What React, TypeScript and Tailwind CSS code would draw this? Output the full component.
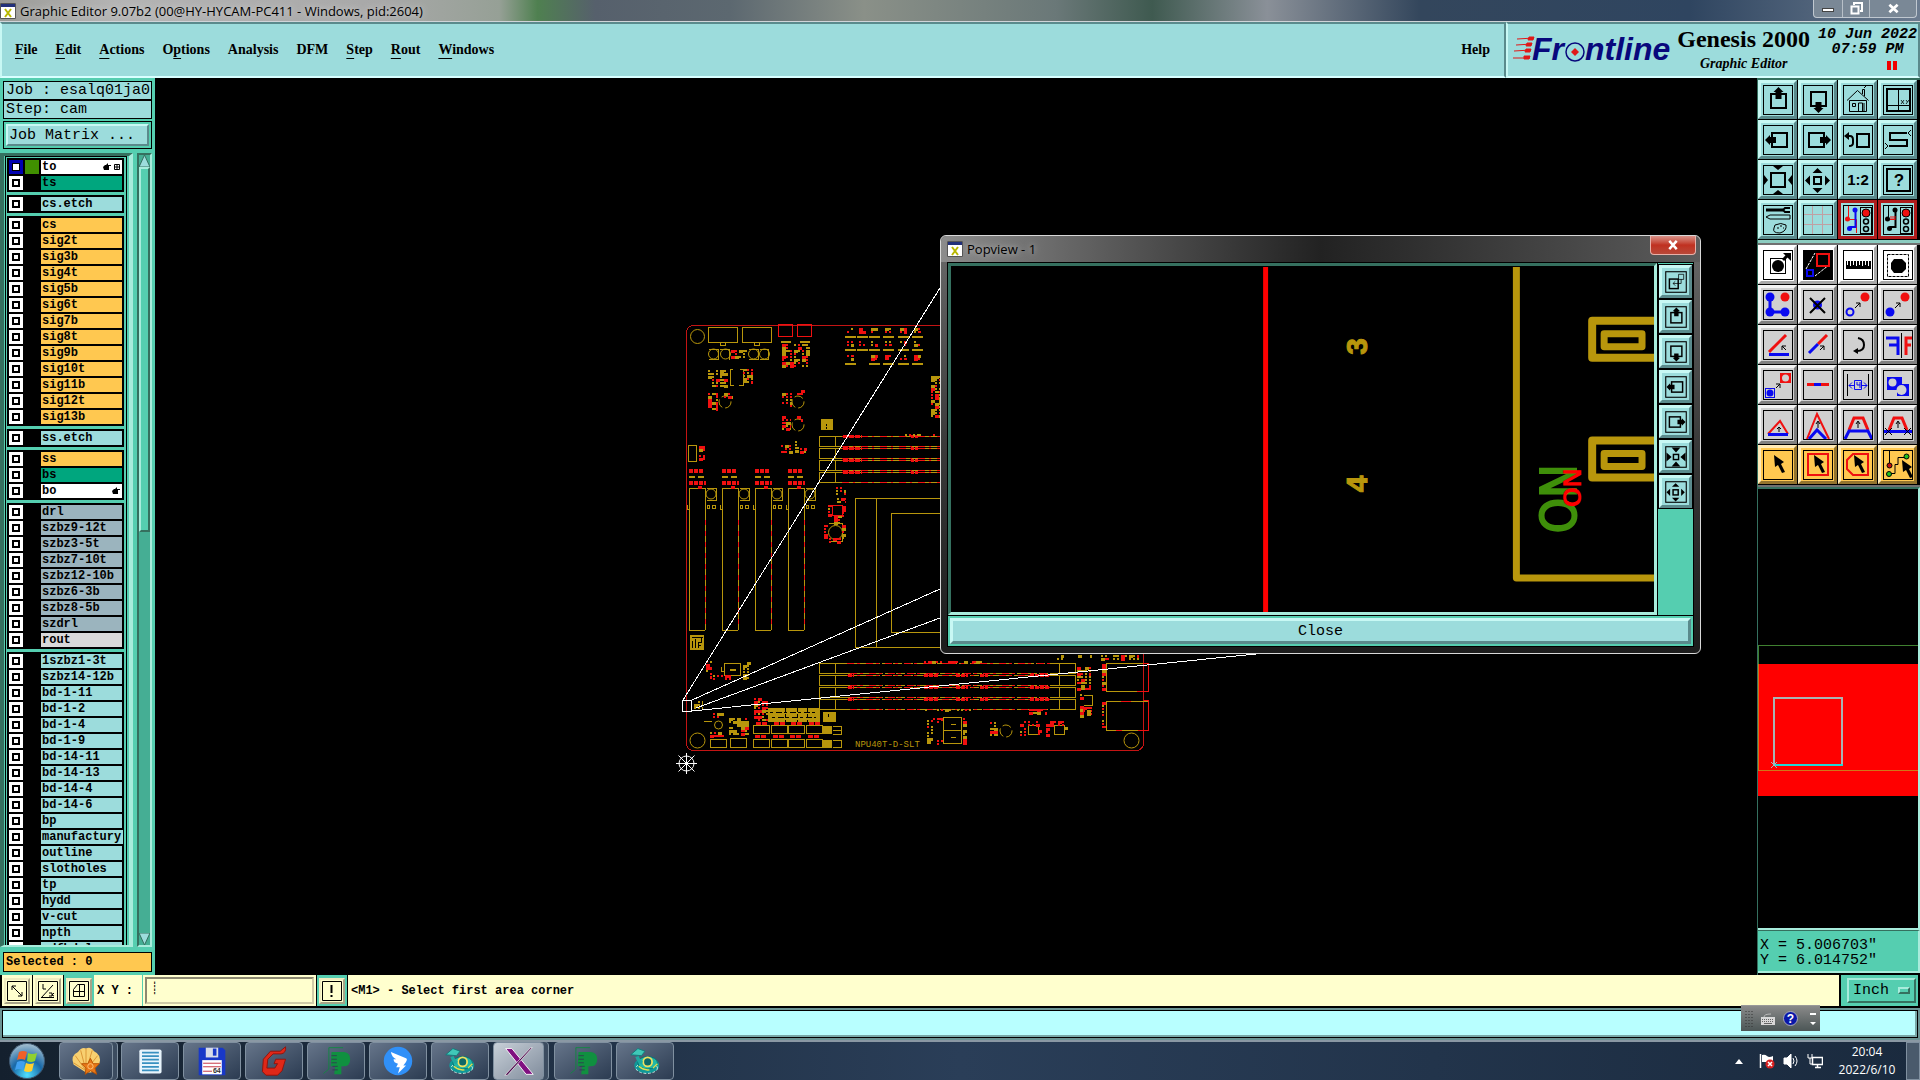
import { useState, type ReactNode } from "react";
import clsx from "clsx";

const GOLD = "#b8960c";
const RED = "#f01010";
const BLUE = "#0a0af0";
const INK = "#000";

type Layer = { name: string; tone: string; marks?: string };

const AQUA = "bg-[#9cdcdc]";
const AMBER = "bg-[#ffc850]";
const GREEN = "bg-[#00a67e]";
const STEEL = "bg-[#9bb4be]";

const layersOf = (tone: string, names: string): Layer[] =>
  names.split(" ").map((name) => ({ name, tone }));

const layerGroups: Layer[][] = [
  [
    { name: "to", tone: "bg-white", marks: "hand-grid" },
    { name: "ts", tone: GREEN },
  ],
  layersOf(AQUA, "cs.etch"),
  layersOf(
    AMBER,
    "cs sig2t sig3b sig4t sig5b sig6t sig7b sig8t sig9b sig10t sig11b sig12t sig13b"
  ),
  layersOf(AQUA, "ss.etch"),
  [
    { name: "ss", tone: AMBER },
    { name: "bs", tone: GREEN },
    { name: "bo", tone: "bg-white", marks: "hand" },
  ],
  [
    ...layersOf(
      STEEL,
      "drl szbz9-12t szbz3-5t szbz7-10t szbz12-10b szbz6-3b szbz8-5b szdrl"
    ),
    { name: "rout", tone: "bg-[#d9d9d9]" },
  ],
  layersOf(
    AQUA,
    "1szbz1-3t szbz14-12b bd-1-11 bd-1-2 bd-1-4 bd-1-9 bd-14-11 bd-14-13 bd-14-4 bd-14-6 bp manufactury outline slotholes tp hydd v-cut npth pdfhdrl"
  ),
];

const menus: [string, number][] = [
  ["File", 0],
  ["Edit", 0],
  ["Actions", 0],
  ["Options", 1],
  ["Analysis", -1],
  ["DFM", -1],
  ["Step", 0],
  ["Rout", 0],
  ["Windows", 0],
];

const bevel =
  "border-t-[#c8f8f4] border-l-[#c8f8f4] border-b-[#5a8a8c] border-r-[#5a8a8c]";
const serif = "font-['Liberation_Serif',serif]";
const mono = "font-['Liberation_Mono',monospace]";

/* ---------- tool icons, drawn on a 30x30 grid ---------- */

const Cursor = ({ x = 0, y = 0 }: { x?: number; y?: number }) => (
  <path
    d="M11 5l1 12 3-2 4 8 3-1-4-8 3-2z"
    fill={INK}
    transform={`translate(${x} ${y})`}
  />
);

const smallArrow = (x: number, y: number, dx = 5, dy = -5) => (
  <path
    d={`M${x} ${y}l${dx} ${dy}m${dx > 0 ? -4 : 4} 0h${dx > 0 ? 4 : -4}v4`}
    stroke={INK}
    fill="none"
  />
);

const upTip = <path d="M15 18v-6m-2 2l2-3 2 3" stroke={INK} fill="none" />;

const icons: Record<string, ReactNode> = {
  "Pan up": (
    <>
      <rect x="8" y="9" width="15" height="14" fill="none" stroke={INK} strokeWidth="2" />
      <path d="M15.500 2l5 5h-2v7h-6v-7h-2z" />
    </>
  ),
  "Pan down": (
    <>
      <rect x="8" y="7" width="15" height="14" fill="none" stroke={INK} strokeWidth="2" />
      <path d="M15.500 28l5-5h-2v-6h-6v6h-2z" />
    </>
  ),
  Home: (
    <g fill="none" stroke={INK}>
      <path d="M4 15.500L14.500 5.500l11 10M6.500 15.500v11h17v-11zM19.500 9V4.500h2V11M21 3l2-2" />
      <path d="M9.500 18.500h3v3h-3zM15.500 26v-8h4v8M21 18v8" />
    </g>
  ),
  "Zoom XY": (
    <>
      <rect x="4" y="4" width="23" height="22" fill="none" stroke={INK} strokeWidth="2" />
      <path d="M15.500 4v22M4 20.500h23" stroke={INK} />
      <path d="M18 15l3 4m0-4l-3 4M23 15l1.500 2m1.500-2l-3 4" stroke={INK} strokeWidth=".8" />
    </>
  ),
  "Pan left": (
    <>
      <rect x="9" y="8" width="15" height="14" fill="none" stroke={INK} strokeWidth="2" />
      <path d="M2 15l5-5v2h6v6H7v2z" />
    </>
  ),
  "Pan right": (
    <>
      <rect x="6" y="8" width="15" height="14" fill="none" stroke={INK} strokeWidth="2" />
      <path d="M28 15l-5-5v2h-6v6h6v2z" />
    </>
  ),
  "Previous view": (
    <>
      <rect x="14" y="9" width="12" height="13" fill="none" stroke={INK} strokeWidth="2" />
      <path d="M4 11h3q3 0 3 4v3q0 3-4 3" fill="none" stroke={INK} strokeWidth="2" />
      <path d="M1 11l5-4v8z" />
    </>
  ),
  Serpentine: (
    <g fill="none" stroke={INK}>
      <path d="M24 8H7v7h17v6H6" strokeWidth="2" />
      <path d="M28 5l-3 3 3 3M2 18l3 3-3 3" />
    </g>
  ),
  "Zoom in": (
    <>
      <rect x="8" y="8" width="14" height="14" fill="none" stroke={INK} strokeWidth="2" />
      <path d="M15 5l5-4H10zM15 25l5 4H10zM5 15l-4-5v10zM25 15l4-5v10z" />
    </>
  ),
  "Shrink view": (
    <>
      <rect x="11.500" y="11.500" width="7" height="7" fill="none" stroke={INK} strokeWidth="2" />
      <path d="M15 9l6-7H9zM15 21l6 7H9zM9 15L2 9v12zM21 15l7-6v12z" />
    </>
  ),
  "Zoom out": (
    <>
      <rect x="11" y="12" width="7" height="7" fill="none" stroke={INK} strokeWidth="2" />
      <path d="M14.500 3l5 5h-10zM14.500 28l5-5h-10zM2 15.500l5-5v10zM27 15.500l-5-5v10z" />
    </>
  ),
  Scale: (
    <text x="15" y="20" fontSize="15" fontWeight="bold" textAnchor="middle" fontFamily="Liberation Sans, sans-serif">
      1:2
    </text>
  ),
  Query: (
    <>
      <rect x="4" y="4" width="23" height="22" fill="none" stroke={INK} strokeWidth="2" />
      <text x="16" y="21" fontSize="17" fontWeight="bold" textAnchor="middle" fontFamily="Liberation Sans, sans-serif">
        ?
      </text>
    </>
  ),
  Options: (
    <g fill="none" stroke={INK}>
      <path d="M3 5h17" strokeWidth="3" />
      <path d="M27 3h-5l-2 2 2 2h5" strokeWidth="2" />
      <path d="M3 12l4-2h20v4H7z" />
      <path d="M12 20q6-3 11 0 1 6-6 8-8 0-6-5zM14 23h2m1-2h2m1 2h1" />
    </g>
  ),
  Grid: <path d="M9.500 1v28M19.500 1v28M1 9.500h28M1 19.500h28" stroke="#c0a0a4" />,
  "Online DRC": <TrafficLight wires={[RED, BLUE]} />,
  "Net DRC": <TrafficLight wires={[INK, INK]} comb />,
  "Select pad": (
    <>
      <rect x="7.500" y="8.500" width="15" height="15" fill="none" stroke={INK} />
      <circle cx="15" cy="16" r="6" />
      <path d="M20 10l5-5" stroke={INK} strokeWidth="3" />
      <path d="M20 3h8v8z" />
    </>
  ),
  Popview: (
    <>
      <path d="M1 1h28v28H1z" />
      <path d="M3 19L12 3M12 26l14-11" stroke="#fff" strokeDasharray="3 1" />
      <rect x="14" y="4" width="12" height="12" fill="none" stroke={RED} strokeWidth="2" />
      <rect x="4" y="20" width="6" height="6" fill="none" stroke={BLUE} strokeWidth="2" />
    </>
  ),
  Measure: (
    <>
      <path d="M3 11h25v8H3z" />
      <path d="M4.500 11v4m3-4v5m3-5v4m3-4v5m3-5v4m3-4v5m3-5v4m3-4v5" stroke="#fff" />
    </>
  ),
  "Feature area": (
    <>
      <rect x="4.500" y="4.500" width="21" height="22" fill="none" stroke={INK} strokeDasharray="3 1" />
      <path d="M11 9h8l4 4v6l-4 4h-8l-3-4v-6z" />
    </>
  ),
  "Copy net": (
    <>
      <path d="M7 7v15h15" fill="none" stroke={BLUE} strokeWidth="3" />
      <g fill={BLUE}>
        <circle cx="7" cy="7" r="4.500" />
        <circle cx="7" cy="22" r="4.500" />
        <circle cx="22" cy="22" r="4.500" />
      </g>
      <circle cx="22" cy="7" r="4.500" fill={RED} />
    </>
  ),
  Delete: (
    <>
      <circle cx="14.500" cy="15" r="4.500" fill={BLUE} />
      <path d="M7 8l15 15M22 8L7 23" stroke={INK} strokeWidth="2" />
    </>
  ),
  Move: (
    <>
      <circle cx="7" cy="22" r="3.500" fill="none" stroke={BLUE} strokeWidth="2" />
      {smallArrow(12, 18)}
      <circle cx="22" cy="7" r="4.500" fill={RED} />
    </>
  ),
  Copy: (
    <>
      <circle cx="7" cy="22" r="4.500" fill={BLUE} />
      {smallArrow(12, 18)}
      <circle cx="22" cy="7" r="4.500" fill={RED} />
    </>
  ),
  Rotate: (
    <>
      <path d="M6 22L23 5" stroke={RED} strokeWidth="3" />
      <path d="M6 24.500h20" stroke={BLUE} strokeWidth="3" />
      {smallArrow(23, 20, -4, -4)}
    </>
  ),
  Stretch: (
    <>
      <path d="M15 14l9-9" stroke={RED} strokeWidth="3" />
      <path d="M6 23l9-9" stroke={BLUE} strokeWidth="3" />
      {smallArrow(17, 20, 4, -4)}
    </>
  ),
  Turn: (
    <>
      <path d="M15 8q6 1 6 7t-7 6" fill="none" stroke={INK} strokeWidth="2" />
      <path d="M10 21l5-3v6z" />
    </>
  ),
  Mirror: (
    <g fill="none" strokeWidth="3">
      <path d="M3 8h12v17M15 15H6" stroke={BLUE} />
      <path d="M29 8h-6v17M23 15h5" stroke={RED} />
      <path d="M18.500 3v25" stroke={INK} strokeWidth="1" />
    </g>
  ),
  Transform: (
    <>
      <rect x="2.500" y="18.500" width="9" height="9" fill="none" stroke={BLUE} />
      <circle cx="7" cy="23" r="3.500" fill={BLUE} />
      {smallArrow(13, 18, 4, -4)}
      <path d="M17 3h11v10H17z" fill={RED} />
      <circle cx="22.500" cy="8" r="3.500" fill="#d0d0d0" />
    </>
  ),
  Break: (
    <>
      <path d="M4 14.500h22" stroke={RED} strokeWidth="3" />
      <path d="M11 14.500h7" stroke={BLUE} strokeWidth="3" />
    </>
  ),
  Spacing: (
    <>
      <path d="M4.500 4v22M25.500 4v22" stroke={INK} />
      <path d="M6 15.500h5m8 0h5M9 12.500l-3 3 3 3M21 12.500l3 3-3 3M11.500 10.500h7v9h-7zM14 12v3h3m0-3v6" stroke={BLUE} fill="none" />
    </>
  ),
  Merge: (
    <>
      <path d="M4 7h15v7h7v12H14v-6H4z" fill={BLUE} />
      <circle cx="9.500" cy="12.500" r="4" fill="#d0d0d0" />
      <circle cx="18.500" cy="20" r="5" fill="#d0d0d0" />
    </>
  ),
  "Corner 1": (
    <>
      <path d="M5 24L17 11l8 13" fill="none" stroke={RED} strokeWidth="2" />
      <path d="M5 24.500h20" stroke={BLUE} strokeWidth="3" />
      <path d="M16 22v-5m-2 2l2-2 2 2" stroke={INK} fill="none" />
    </>
  ),
  "Corner 2": (
    <>
      <path d="M4 29L14 4l12 25" fill="none" stroke={RED} strokeWidth="2" />
      <path d="M6 29l8-9 9 9" fill="none" stroke={BLUE} strokeWidth="3" />
      {upTip}
    </>
  ),
  "Corner 3": (
    <>
      <path d="M6 20l5-12h9l5 12" fill="none" stroke={RED} strokeWidth="3" />
      <path d="M2 29l4-8h19l4 8" fill="none" stroke={BLUE} strokeWidth="3" />
      {upTip}
    </>
  ),
  "Corner 4": (
    <>
      <path d="M6 20l5-12h8l5 12" fill="none" stroke={RED} strokeWidth="3" />
      <path d="M1 21.500h28" stroke={BLUE} strokeWidth="3" />
      <path d="M2 18l7 7m0-7l-7 7M21 18l7 7m0-7l-7 7" stroke={INK} />
      {upTip}
    </>
  ),
  "Select feature": <Cursor />,
  "Select frame": (
    <>
      <rect x="5" y="4" width="20" height="21" fill="none" stroke={RED} strokeWidth="2" />
      <Cursor />
    </>
  ),
  "Select polygon": (
    <>
      <path d="M10 4h15v21H10l-6-6v-9z" fill="none" stroke={RED} strokeWidth="2" />
      <Cursor />
    </>
  ),
  "Select net": (
    <>
      <path d="M6.500 1v13M6 23.500h6v-9h3v-7h8" fill="none" stroke={INK} />
      <circle cx="6.500" cy="15.500" r="2.500" fill="#c01010" stroke={INK} />
      <circle cx="6" cy="24" r="2.500" fill="#20c020" stroke={INK} />
      <circle cx="23.500" cy="6.500" r="2.500" fill="#20c020" stroke={INK} />
      <Cursor x={8} y={5} />
    </>
  ),
  "Follow view": (
    <g fill="none" stroke={INK}>
      <rect x="6" y="11" width="12" height="13" strokeWidth="2" />
      <path d="M18.500 4.500h7v7h-7zM22 11v6H11m3-3l-3 3 3 3" />
    </g>
  ),
};

function TrafficLight({ wires, comb }: { wires: string[]; comb?: boolean }) {
  return (
    <>
      {!comb && <path d="M4.500 14.500h9V28" fill="none" stroke={RED} />}
      <path d="M5.500 1v12" stroke={wires[0]} />
      <path d="M12.500 4v18H7" fill="none" stroke={wires[1]} strokeWidth="2" />
      {comb && <path d="M6 14.500h6M8 11v4m2-4v4m2-4v4" stroke={RED} />}
      <circle cx="4.500" cy="14" r="2.500" fill={wires[0]} />
      <circle cx="12" cy="5" r="2.500" fill={wires[1]} />
      <circle cx="6.500" cy="23.500" r="2.500" fill={wires[1]} />
      <rect x="17.500" y="2.500" width="11" height="26" fill="#9cdcdc" stroke={INK} />
      <circle cx="23" cy="8" r="4" fill={RED} stroke={INK} />
      <circle cx="23" cy="16.500" r="2.500" fill="none" stroke={INK} strokeWidth="1.500" />
      <circle cx="23" cy="24" r="2.500" fill="none" stroke={INK} strokeWidth="1.500" />
    </>
  );
}

const toneClass: Record<string, string> = {
  aqua: `${AQUA} ${bevel}`,
  red: `${AQUA} border-[#b01c1c]`,
  white: "bg-white border-t-white border-l-white border-b-[#a8a8a8] border-r-[#a8a8a8]",
  gray: "bg-[#d0d0d0] border-t-[#f4f4f4] border-l-[#f4f4f4] border-b-[#808080] border-r-[#808080]",
  amber: "bg-[#ffc850] border-t-[#ffeab8] border-l-[#ffeab8] border-b-[#94742e] border-r-[#94742e]",
};

const ToolButton = ({ name, tone }: { name: string; tone: string }) => (
  <button
    aria-label={name}
    title={name}
    className={clsx("flex aspect-square items-center justify-center border-[3px]", toneClass[tone])}
  >
    <svg viewBox="0 0 30 30" className="size-[30px]">
      {icons[name]}
      <rect x=".5" y=".5" width="29" height="29" fill="none" stroke={INK} />
    </svg>
  </button>
);

const viewTools: [string, string][] = [
  "Pan up", "Pan down", "Home", "Zoom XY",
  "Pan left", "Pan right", "Previous view", "Serpentine",
  "Zoom in", "Zoom out", "Scale", "Query",
  "Options", "Grid", "Online DRC", "Net DRC",
].map((n) => [n, n.endsWith("DRC") ? "red" : "aqua"]);

const editTools: [string, string][] = [
  "Select pad", "Popview", "Measure", "Feature area",
  "Copy net", "Delete", "Move", "Copy",
  "Rotate", "Stretch", "Turn", "Mirror",
  "Transform", "Break", "Spacing", "Merge",
  "Corner 1", "Corner 2", "Corner 3", "Corner 4",
  "Select feature", "Select frame", "Select polygon", "Select net",
].map((n, i) => [n, i < 4 ? "white" : i < 20 ? "gray" : "amber"]);

/* ---------- board drawing ---------- */

// small parts that are too dense to be drawn one by one
const Parts = ({ x, y, w, h, red = 0.5 }: { x: number; y: number; w: number; h: number; red?: number }) => {
  let seed = x * 31 + y * 17;
  const next = () => {
    seed = (seed * 1103515245 + 12345) % 2147483648;
    return seed / 2147483648;
  };
  const cells: ReactNode[] = [];
  for (let cy = 0; cy < h; cy += 3) {
    for (let cx = 0; cx < w; cx += 4) {
      const r = next();
      if (r > 0.82) continue;
      const color = next() < red ? RED : GOLD;
      const cw = Math.min(r < 0.4 ? 4 : 2, w - cx);
      cells.push(
        <rect key={`${cx}-${cy}`} x={x + cx} y={y + cy} width={cw} height={r < 0.3 ? 3 : 2} fill={color} />
      );
    }
  }
  return <>{cells}</>;
};

const slots = [689, 722, 755, 788];
const clusters: [number, number, number, number, number][] = [
  [731, 350, 16, 8, 0.2], [782, 344, 28, 11, 0.5], [782, 356, 28, 11, 0.5],
  [708, 370, 20, 16, 0.45], [743, 369, 10, 15, 0.2], [708, 393, 10, 16, 0.6],
  [724, 393, 9, 4, 0.6], [782, 393, 10, 14, 0.6], [797, 390, 8, 6, 0.7],
  [782, 416, 9, 14, 0.6], [797, 416, 6, 4, 0.6], [781, 445, 12, 9, 0.9],
  [795, 441, 4, 13, 0.1], [800, 448, 7, 4, 0.6], [699, 446, 6, 5, 0.7],
  [699, 455, 6, 6, 0.7], [836, 487, 10, 8, 0.4], [837, 498, 9, 6, 0.5],
  [828, 505, 5, 12, 0.8], [842, 506, 4, 11, 0.8], [834, 516, 8, 8, 0.8],
  [824, 525, 4, 13, 0.8], [842, 525, 4, 13, 0.7], [829, 538, 12, 4, 0.9],
  [706, 661, 6, 17, 0.7], [713, 675, 18, 5, 0.9], [743, 662, 8, 17, 0.1],
  [694, 701, 9, 9, 0.1], [754, 698, 14, 23, 0.6], [713, 713, 11, 6, 0.4],
  [729, 718, 20, 16, 0.3], [710, 732, 15, 5, 0.7], [1077, 667, 14, 22, 0.5],
  [1080, 694, 4, 22, 0.5], [1083, 707, 9, 9, 0.9], [1102, 664, 4, 28, 0.7],
  [1102, 702, 4, 28, 0.7], [927, 720, 6, 24, 0.2], [933, 718, 10, 4, 0.9],
  [933, 740, 12, 4, 0.9], [963, 718, 4, 25, 0.3], [990, 722, 8, 14, 0.5],
  [1020, 721, 20, 5, 0.9], [1020, 728, 8, 8, 0.7], [1038, 727, 4, 9, 0.3],
  [1046, 721, 20, 5, 0.9], [1046, 728, 8, 8, 0.7], [1064, 727, 4, 9, 0.3],
  [1053, 655, 11, 6, 0], [1078, 655, 14, 2, 0], [1101, 655, 38, 4, 0.4],
  [931, 376, 9, 40, 0.4], [905, 434, 35, 3, 0.4], [924, 661, 60, 3, 0.5],
  [921, 709, 50, 3, 0.2], [1029, 709, 18, 4, 0.9],
];

const Board = () => (
  <svg
    viewBox="155 78 1602 897"
    preserveAspectRatio="xMinYMin meet"
    className="block size-full"
    shapeRendering="crispEdges"
    fill="none"
    stroke={GOLD}
  >
    <rect x="686.500" y="325.500" width="457" height="425" rx="7" stroke="#c41414" />
    <g shapeRendering="auto">
      <circle cx="697.500" cy="336.500" r="7" />
      <circle cx="697.500" cy="740.500" r="7.500" />
      <circle cx="1131.500" cy="740.500" r="7.500" />
      {[713, 725, 753, 764].map((x) => (
        <circle key={x} cx={x + 0.5} cy="354" r="5" />
      ))}
      <circle cx="725" cy="402" r="6" strokeDasharray="9 3" />
      <circle cx="798" cy="402" r="6" strokeDasharray="9 3" />
      <circle cx="798" cy="425" r="6" strokeDasharray="9 3" />
      <circle cx="835.500" cy="532.500" r="7" />
      <circle cx="718.500" cy="725" r="4" />
      <circle cx="1006" cy="731" r="6" strokeDasharray="9 3" />
    </g>
    <path d="M708.500 327.500h29v15h-29zM742.500 327.500h29v15h-29zM720 343v2h5v-2M754 343v2h5v-2M708.500 349.500h10v10h-10M748.500 349.500h10v10h-10M719.500 349.500h10v10M759.500 349.500h9v10h-9" />
    <path d="M778.500 324.500h14v12h-14zM797.500 324.500h14v12h-14z" stroke={RED} />
    <path d="M781 341.500h10M800 341.500h10" strokeWidth="2" />
    <path d="M730.500 369v17M730 369.500h3m-3 16h4M740 369.500h3v16h-4M688.500 445.500h8v16h-8z" />
    {[331, 344, 358].map((y) =>
      [850, 862, 874, 888, 903, 917]
        .filter((x) => !(y === 358 && x === 862))
        .map((x) => (
          <g key={`${x}-${y}`} stroke="none">
            <Parts x={x - 3} y={y - 3} w={7} h={6} red={0.75} />
            <rect x={x - 5} y={y + 5} width="11" height="2" fill={GOLD} />
          </g>
        ))
    )}
    <rect x="821" y="419" width="12" height="11" fill={GOLD} stroke="none" />
    <path d="M826 425h1m-1 3h1" stroke={INK} strokeWidth="2" />

    {[436, 448, 460, 472].map((y) => (
      <g key={y}>
        <path d={`M940 ${y}.500H819.500v10H940M835.500 ${y}v10`} />
        <path d={`M842 ${y}.500h98M842 ${y + 10}.500h98`} stroke={RED} strokeDasharray="7 4 2 6" />
        <path d={`M843 ${y}h19`} stroke={RED} strokeWidth="3" strokeDasharray="5 1" />
        <path d={`M911 ${y}h8`} stroke={RED} strokeWidth="3" strokeDasharray="3 1" />
      </g>
    ))}
    {[663, 675, 687, 699].map((y) => (
      <g key={y}>
        <path d={`M819.500 ${y}.500h256v10h-256zM835.500 ${y}v10M1059.500 ${y}v10`} />
        <path d={`M847 ${y}.500h204M850 ${y + 10}.500h200`} stroke={INK} strokeDasharray="2 9" />
        <path d={`M847 ${y}.500h204M850 ${y + 10}.500h200`} stroke={RED} strokeDasharray="7 3 3 6" />
        {y > 663 && <path d={`M848 ${y}h6m70 0h14m18 0h12m12 0h8m42 0h20`} stroke={RED} strokeWidth="3" strokeDasharray="4 1" />}
      </g>
    ))}

    {slots.map((x) => (
      <g key={x}>
        <path d={`M${x + 15}.500 488H${x}.500v142h15`} />
        <path d={`M${x + 16}.500 488v142`} />
        <path d={`M${x + 16}.500 520v110`} stroke={RED} strokeDasharray="5 6" />
        <path d={`M${x} 471h15M${x} 483h17`} stroke={RED} strokeWidth="4" strokeDasharray="4 1" />
        <path d={`M${x} 476.500h6m3 0h6`} strokeWidth="2" />
        <path d={`M${x + 9} 487h4`} stroke={RED} strokeWidth="3" />
        <circle cx={x + 22} cy="494" r="5" shapeRendering="auto" />
        <path d={`M${x + 17}.500 488.500h10v12h-10M${x + 18}.500 505.500h2v3h-2zM${x + 23}.500 505.500h3v3h-3zM${x - 2}.500 505v4h2`} />
      </g>
    ))}

    <path d="M940 498.500h-84.500v149H940M876.500 498v149M940 513.500h-48.500v119H940" />
    <path d="M832.500 505.500h10v10h-10z" stroke={RED} />
    <path d="M828.500 523.500h14v18h-14M724.500 663.500h16v12h-16zM721 667v4h3" />
    <path d="M730 669.500h6" strokeWidth="2" />
    <path d="M690 635h14v15h-14z" fill={GOLD} stroke="none" />
    <path d="M692 637.500h11M692.500 641v7m3-9v9m3-6v6m0-6h3m0-5v5m-3 3h2" stroke={INK} />

    <path d="M768 708h52v14h-52zM823 712h13v10h-13zM822 726h10v8h-10zM822 740h10v8h-10z" fill={GOLD} stroke="none" />
    <path d="M770 712.500h48M772 717.500h44M828.500 714v6" stroke={INK} strokeDasharray="3 3 6 2" />
    <path d="M785.500 708v14m12-14v14m10-14v14" stroke={INK} strokeDasharray="4 2" />
    <path d="M833 726.500h8v8h-8m0-4h8M833 740.500h8v7h-8" />
    {[753, 771, 788, 806].map((x) => (
      <g key={x}>
        <path d={`M${x}.500 725.500h16v8h-16zM${x}.500 739.500h16v8h-16z`} />
        <path d={`M${x + 3} 723.500h11M${x + 2} 736.500h12`} stroke={RED} strokeWidth="3" strokeDasharray="5 1" />
      </g>
    ))}
    <path d="M710.500 739.500h16v8h-16zM730.500 738.500h16v9h-16zM704 721.500h8" />
    <path d="M943.500 717.500h18v26h-18zM943 730.500h18M951 724h5m-5 13h5" />
    <path d="M1149 663.500h-43v28h43M1149 701.500h-43v29h43" />
    <path d="M1143 663.500h5.500v28h-12m7 9h5v30h-11M1121 701.500h10m-15 29h6" stroke={RED} />
    <path d="M1028.500 725.500h10v9h-10zM1054.500 725.500h10v9h-10zM1083.500 695.500h9v10h-9" />
    <g stroke="none">
      {clusters.map(([x, y, w, h, red]) => (
        <Parts key={`${x}-${y}`} x={x} y={y} w={w} h={h} red={red} />
      ))}
    </g>
    <text x="855" y="747" fontSize="9" fontFamily="Liberation Mono, monospace" fill={GOLD} stroke="none" shapeRendering="auto">
      NPU40T-D-SLT
    </text>

    <g stroke="#fff">
      <path d="M682.500 700.500h9v11h-9zM683 700L940 288M692 700l248-111M696 708l244-90M692 711L1256 654" />
      <g shapeRendering="auto">
        <circle cx="686.500" cy="763.500" r="7.500" />
        <path d="M676 763.500h21M686.500 753v21M678.500 755.500l16 16m0-16l-16 16" />
      </g>
    </g>
  </svg>
);

/* ---------- popup ---------- */

const PopDrawing = () => (
  <svg viewBox="950 266 705 349" preserveAspectRatio="xMaxYMin slice" className="block size-full" stroke="none" fill={GOLD}>
    <rect x="1263" y="267" width="5" height="346" fill="#f00" />
    <path d="M1517 267v312h138" fill="none" stroke={GOLD} strokeWidth="7" strokeLinejoin="round" />
    {[0, 120].map((dy) => (
      <g key={dy} transform={`translate(0 ${dy})`} fill="none" stroke={GOLD} strokeWidth="8" strokeLinejoin="round">
        <path d="M1655 321h-62v37h62" />
        <path d="M1605 334h38v13h-38z" strokeWidth="7" />
      </g>
    ))}
    <g fontFamily="Liberation Sans, sans-serif" fontWeight="bold" stroke={GOLD}>
      <text transform="translate(1367 355) rotate(-90)" fontSize="30">3</text>
      <text transform="translate(1367 493) rotate(-90)" fontSize="30">4</text>
    </g>
    <text transform="translate(1577 534) rotate(-90)" fontSize="50" fill="#3f8f0a" stroke="#3f8f0a" strokeWidth="2" fontFamily="DejaVu Sans Condensed, Liberation Sans, sans-serif">
      ON
    </text>
    <text transform="translate(1582 508) rotate(-90)" fontSize="26" fill="#f00" fontWeight="bold" fontFamily="Liberation Sans, sans-serif">
      ON
    </text>
  </svg>
);

const popTools = ["Follow view", "Pan up", "Pan down", "Pan left", "Pan right", "Shrink view", "Zoom out"];

const XIcon = () => (
  <svg viewBox="0 0 16 16" className="size-4 shrink-0">
    <path d="M.5.5h15v15H.5z" fill="#fff" stroke="#555" />
    <path d="M1 1h14v3H1z" fill="#22307a" />
    <path d="M5 6l6 8M11 6l-6 8" stroke="#b8b800" strokeWidth="2" />
  </svg>
);

const Popview = () => (
  <section
    aria-label="Popview - 1"
    className="absolute left-[785px] top-[157px] flex h-[419px] w-[761px] flex-col rounded-md border border-[#d8d8d8] bg-gradient-to-b from-[#6a6a6a] via-[#3a3a3a] to-[#1c1c1c] px-[6px] pb-[6px]"
  >
    <header className="-mx-[6px] flex h-[26px] items-center gap-1 rounded-t-md bg-gradient-to-r from-[#8c8c8c] via-[#222] to-[#5c5c5c] pl-[6px] pr-1">
      <XIcon />
      <h2 className="flex-1 font-['Open_Sans',sans-serif] text-[13px] leading-none text-black [text-shadow:0_0_6px_#ccc]">Popview - 1</h2>
      <button aria-label="Close popview" className="flex h-[19px] w-[46px] items-center justify-center self-start rounded-b border border-t-0 border-[#e8b0a8] bg-gradient-to-b from-[#d89088] via-[#c03020] to-[#b84838]">
        <svg viewBox="0 0 12 12" className="size-[10px]" stroke="#fff" strokeWidth="3">
          <path d="M1.500 1l9 10m0-10l-9 10" />
        </svg>
      </button>
    </header>
    <div className="flex min-h-0 flex-1 flex-col border border-black bg-[#55ceb0]">
      <div className="flex min-h-0 flex-1">
        <div className="min-w-0 flex-1 border-[3px] border-b-[#a8ecdc] border-l-[#35705f] border-r-[#a8ecdc] border-t-[#35705f] bg-black">
          <PopDrawing />
        </div>
        <div className="flex w-[36px] flex-col border-l border-black pt-px">
          {popTools.map((name) => (
            <button key={name} aria-label={name} className={clsx("m-px flex h-[33px] items-center justify-center border-[3px] outline-1 outline-black", AQUA, bevel)}>
              <svg viewBox="0 0 30 30" className="size-[22px]">
                {icons[name]}
                <rect x="1" y="1" width="28" height="28" fill="none" stroke={INK} strokeWidth="1.500" />
              </svg>
            </button>
          ))}
        </div>
      </div>
      <div className="border-t border-black p-[2px]">
        <button className={clsx("flex h-[26px] w-full items-center justify-center border-[3px] pt-px text-[15px] leading-none", mono, AQUA, bevel)}>
          Close
        </button>
      </div>
    </div>
  </section>
);

/* ---------- side panels ---------- */

const Hand = () => (
  <svg viewBox="0 0 8 8" className="size-2">
    <path d="M0 4l2-2 1 0 2-2v2h3v1H6v4H1z" />
  </svg>
);

const LayerRow = ({ layer, first }: { layer: Layer; first?: boolean }) => (
  <li className="flex h-[14px] gap-[2px]">
    <input
      id={`layer-${layer.name}`}
      type="checkbox"
      className={clsx(
        "h-[14px] w-[14px] shrink-0 appearance-none border-[3px] bg-white",
        first
          ? "border-[#0000b0] shadow-[inset_0_0_0_1px_#000]"
          : "border-white shadow-[inset_0_0_0_2px_#000]"
      )}
    />
    <span className={clsx("w-[14px] shrink-0", first ? "bg-[#409000]" : "bg-black")} />
    <label
      htmlFor={`layer-${layer.name}`}
      className={clsx("flex flex-1 items-center gap-[3px] pl-px pr-[2px] text-xs/[14px] font-bold", mono, layer.tone)}
    >
      <span className="flex-1">{layer.name}</span>
      {layer.marks && <Hand />}
      {layer.marks === "hand-grid" && (
        <svg viewBox="0 0 6 6" className="size-[6px]">
          <path d="M.5.5h5v5h-5zM3 0v6M0 3h6" fill="none" stroke={INK} />
        </svg>
      )}
    </label>
  </li>
);

const LayerPanel = () => (
  <aside className="flex w-[155px] shrink-0 flex-col bg-[#55ceb0] px-[3px] pt-[3px]">
    <div className={clsx("text-[15px]/[18px]", mono)}>
      <p className={clsx("h-[19px] whitespace-pre border border-black pl-[2px]", AQUA)}>Job : esalq01ja0</p>
      <p className={clsx("h-[19px] whitespace-pre border border-black pl-[2px]", AQUA)}>Step: cam</p>
      <div className="mt-[2px] border border-black p-[2px]">
        <button className={clsx("block h-[22px] w-full whitespace-pre border-2 pl-px text-left leading-[20px]", AQUA, bevel)}>
          Job Matrix ...
        </button>
      </div>
    </div>
    <div className="-ml-[3px] mt-[4px] flex min-h-0 flex-1">
      <div className="flex w-[134px] overflow-hidden border-l-4 border-r-4 border-t-[3px] border-b-2 border-b-[#a8ecdc] border-l-[#35705f] border-r-[#a8ecdc] border-t-[#35705f] pl-px">
        <div className="w-[122px] border border-b-0 border-black px-px pt-px">
          <div className="flex flex-col gap-[3px]">
            {layerGroups.map((group, g) => (
              <ul key={g} className="flex w-[117px] flex-col gap-[2px] bg-black p-[2px]">
                {group.map((layer, i) => (
                  <LayerRow key={layer.name} layer={layer} first={g === 0 && i === 0} />
                ))}
              </ul>
            ))}
          </div>
        </div>
      </div>
      <div className="ml-1 flex w-[15px] flex-col border-2 border-b-[#a8ecdc] border-l-[#35705f] border-r-[#a8ecdc] border-t-[#35705f] bg-[#45ae94]">
        <svg viewBox="0 0 11 12" className="h-3 w-[11px]">
          <path d="M5.500 0L11 12H0z" fill="#9cdcdc" stroke="#35705f" />
        </svg>
        <div className="h-[365px] border-2 border-b-[#35705f] border-l-[#a8ecdc] border-r-[#35705f] border-t-[#a8ecdc] bg-[#55ceb0]" />
        <div className="flex-1" />
        <svg viewBox="0 0 11 12" className="h-3 w-[11px]">
          <path d="M0 0h11L5.500 12z" fill="#9cdcdc" stroke="#35705f" />
        </svg>
      </div>
    </div>
    <p className={clsx("mb-[3px] mt-[5px] h-[20px] whitespace-pre border border-black pl-[2px] text-xs/[18px] font-bold", mono, AMBER)}>
      Selected : 0
    </p>
  </aside>
);

const Toolbox = () => (
  <aside className="flex w-[163px] shrink-0 flex-col border-l border-[#35705f] bg-black">
    <div className="grid grid-cols-4 gap-px border-b-[3px] border-t-2 border-b-[#8cccc0] border-t-[#35705f] pb-px pr-[3px]">
      {viewTools.map(([name, tone]) => (
        <ToolButton key={name} name={name} tone={tone} />
      ))}
    </div>
    <div className="grid grid-cols-4 gap-px border-b-2 border-t-2 border-[#707070] pb-px pr-[3px]">
      {editTools.map(([name, tone]) => (
        <ToolButton key={name} name={name} tone={tone} />
      ))}
    </div>
    <div className="flex min-h-0 flex-1 flex-col border-b-2 border-r-2 border-t-2 border-b-[#a8ecdc] border-r-[#a8ecdc] border-t-[#35705f]">
      <svg viewBox="1758 489 160 439" preserveAspectRatio="none" className="size-full" shapeRendering="crispEdges" fill="none">
        <rect x="1758" y="664" width="160" height="132" fill="#f00" />
        <path d="M1758.500 664v-18.500H1918" stroke="#3f8030" />
        <path d="M1758.500 664v106.500H1918" stroke="#d07818" />
        <path d="M1774 765v-67h68v67" stroke="#a8b4b4" strokeWidth="2" />
        <path d="M1774 765h69" stroke="#20d8d8" strokeWidth="2" />
        <path d="M1771 762l6 6m0-6l-6 6" stroke="#a0b8b8" shapeRendering="auto" />
      </svg>
    </div>
    <output className={clsx("mb-[2px] h-[43px] whitespace-pre border-b-2 border-r-2 border-t border-b-[#a8ecdc] border-r-[#a8ecdc] border-t-[#35705f] bg-[#55ceb0] pl-[2px] pt-[7px] text-[15px]/[15px]", mono)}>
      {'X = 5.006703"\nY = 6.014752"'}
    </output>
  </aside>
);

/* ---------- header ---------- */

const TitleBar = () => (
  <header className="flex h-[22px] shrink-0 items-start border-b border-[#d0d4d8] bg-[linear-gradient(90deg,#9a9a96,#b4b4b4_6%,#a8a8a8_20%,#96a096_26%,#4f8050_28%,#56606c_31%,#5c6870_38%,#8a9088_45%,#6a7878_55%,#3f5a50_60%,#8a9098_66%,#33465c_74%,#2f4560_88%,#6c7c90)]">
    <div className="flex flex-1 items-center gap-1 pt-[3px]">
      <XIcon />
      <h1 className="font-['Open_Sans',sans-serif] text-[13px]/[16px] text-black [text-shadow:0_0_6px_#ddd]">
        Graphic Editor 9.07b2 (00@HY-HYCAM-PC411 - Windows, pid:2604)
      </h1>
    </div>
    <div className="mr-[3px] flex h-[18px] overflow-hidden rounded-b border border-t-0 border-[#c0c8d0] bg-[#7a8896]">
      <button aria-label="Minimize" className="flex w-[29px] items-end justify-center border-r border-[#b8c0c8] pb-[5px]">
        <span className="h-1 w-3 border border-[#444] bg-white" />
      </button>
      <button aria-label="Restore" className="flex w-[27px] items-center justify-center border-r border-[#b8c0c8]">
        <svg viewBox="0 0 13 13" className="size-[13px]" fill="none" stroke="#fff" strokeWidth="2">
          <path d="M4 3V1h8v8h-2M1.500 4.500h7v7h-7z" />
        </svg>
      </button>
      <button aria-label="Close" className="flex w-[46px] items-center justify-center">
        <svg viewBox="0 0 12 12" className="size-[11px]" stroke="#fff" strokeWidth="3">
          <path d="M1.500 2l9 8m0-8l-9 8" />
        </svg>
      </button>
    </div>
  </header>
);

const Logo = () => (
  <svg viewBox="0 -6 164 44" className="h-[44px] w-[164px] shrink-0" role="img" aria-label="Frontline">
    <g fill="#e01818" stroke="#e01818">
      <path d="M5 5l17-1M4 11l16-1M2 17l17-1M1 24h17" />
      <path d="M17 3h5l-1 3h-5zM15 9h5l-1 3h-5zM14 15h5l-1 3h-5zM12 22h6l-1 3h-5z" />
    </g>
    <g fontFamily="Liberation Sans, sans-serif" fontSize="32" fontWeight="bold" fontStyle="italic" fill="#08087c">
      <text x="20" y="26">Fr</text>
      <text x="73" y="26">ntline</text>
    </g>
    <circle cx="63" cy="18" r="9" fill="none" stroke="#08087c" strokeWidth="1.500" />
    <path d="M63 14l4 4-4 4-4-4z" fill="#e01818" />
  </svg>
);

const barBevel =
  "border-2 border-t-[#5a8a8c] border-l-[#c8f8f4] border-b-[#d8ffff] border-r-[#5a8a8c]";

const MenuBar = () => (
  <div className="flex h-14 shrink-0">
    <nav className={clsx("flex flex-1 items-center gap-[18px] pl-[13px] pr-[14px] text-sm font-bold", serif, AQUA, barBevel)}>
      {menus.map(([label, hot]) => (
        <button key={label}>
          {hot < 0 ? label : (
            <>
              {label.slice(0, hot)}
              <u className="underline-offset-4">{label[hot]}</u>
              {label.slice(hot + 1)}
            </>
          )}
        </button>
      ))}
      <button className="ml-auto">Help</button>
    </nav>
    <div className={clsx("flex w-[414px] shrink-0 pl-1", AQUA, barBevel)}>
      <div className="flex min-w-0 flex-1 items-center">
        <Logo />
      </div>
      <div className={clsx("flex flex-col items-center gap-[5px] pt-[3px]", serif)}>
        <strong className="text-2xl/[24px]">Genesis 2000</strong>
        <em className="text-sm/[16px] font-bold">Graphic Editor</em>
      </div>
      <div className={clsx("ml-2 mr-px flex flex-col items-center pt-[3px] text-[15px]/[15px] font-bold italic", mono)}>
        <span>10 Jun 2022</span>
        <span>07:59 PM</span>
        <span className="mr-5 mt-1 flex gap-[2px] self-end">
          <i className="h-[9px] w-1 bg-[#f00000]" />
          <i className="h-[9px] w-1 bg-[#f00000]" />
        </span>
      </div>
    </div>
  </div>
);

/* ---------- footer ---------- */

const SnapButton = ({ label, active, children }: { label: string; active?: boolean; children: ReactNode }) => (
  <button
    aria-label={label}
    className={clsx(
      "flex h-[31px] w-[30px] shrink-0 items-center justify-center",
      active ? "bg-[#55ceb0]" : "bg-[#ffffce]"
    )}
  >
    <span className="border-2 border-b-[#a8a488] border-l-[#f0ecc0] border-r-[#a8a488] border-t-[#f0ecc0] bg-[#ffffce] p-px">
      <svg viewBox="0 0 20 20" className="size-5" fill="none" stroke={INK}>
        <path d="M.5.5h19v19H.5z" />
        {children}
      </svg>
    </span>
  </button>
);

const StatusRow = () => {
  const [xy, setXy] = useState("");
  return (
    <div className={clsx("flex h-[33px] shrink-0 bg-black pb-[2px] pl-[2px] pr-[2px] text-xs font-bold", mono)}>
      <div className="flex gap-px">
        <SnapButton label="Absolute">
          <path d="M5 5l10 10M5 9V5h4m6 6v4h-4" />
        </SnapButton>
        <SnapButton label="Angle">
          <path d="M3 16.500h13M3 17L15 4M5 3v5h3M11 12h3v3h-3m5-3l-2 2 2 1" />
        </SnapButton>
        <SnapButton label="Snap" active>
          <path d="M4.500 8.500l4-5h7v12h-11zM10.500 3v13M4 10.500h12" />
        </SnapButton>
      </div>
      <label htmlFor="xy" className="flex w-[48px] items-center whitespace-pre bg-[#ffffce] pl-[3px] pt-px">
        X Y :
      </label>
      <div className="w-[174px] border-l border-[#55ceb0] bg-[#ffffce] p-[2px]">
        <input
          id="xy"
          value={xy}
          placeholder="┊"
          onChange={(e) => setXy(e.target.value)}
          className="size-full border-2 border-b-[#d0cca8] border-l-[#8c8870] border-r-[#d0cca8] border-t-[#8c8870] bg-transparent px-1 pb-1 outline-none placeholder:text-black"
        />
      </div>
      <div className="mx-px flex">
        <SnapButton label="Messages" active>
          <path d="M9.500 4v8m0 2v2" strokeWidth="2" />
        </SnapButton>
      </div>
      <p className="flex flex-1 items-center whitespace-pre bg-[#ffffce] pl-[3px] pt-px">{"<M1> - Select first area corner"}</p>
      <div className="ml-[2px] flex w-[77px] bg-[#55ceb0] py-[3px] pl-[6px] pr-[2px]">
        <div className="relative flex flex-1 items-center border-2 border-b-[#35705f] border-l-[#a8ecdc] border-r-[#35705f] border-t-[#a8ecdc]">
          <select aria-label="Units" className="w-full appearance-none pl-1 pt-px text-[15px] font-normal">
            <option>Inch</option>
            <option>MM</option>
          </select>
          <span className="pointer-events-none absolute right-1 h-[7px] w-3 border-2 border-b-[#35705f] border-l-[#a8ecdc] border-r-[#35705f] border-t-[#a8ecdc]" />
        </div>
      </div>
    </div>
  );
};

const LanguageBar = () => (
  <div className="absolute -top-[5px] right-[98px] flex h-[26px] w-[79px] items-center gap-2 border-t border-[#999] bg-gradient-to-b from-[#8a8a8a] to-[#4c5656] px-1">
    <svg viewBox="0 0 8 16" className="h-4 w-2">
      <path d="M1 0v16M4 0v16M7 0v16" stroke="#333" strokeDasharray="1 2" />
    </svg>
    <svg viewBox="0 0 14 12" className="h-3 w-[14px]">
      <path d="M0 4h14v8H0z" fill="#d8d8d8" />
      <path d="M1 6.500h12M1 8.500h12" stroke="#666" strokeDasharray="1 1" />
      <path d="M3 10.500h8" stroke="#666" />
      <path d="M3 4q0-3 7-3" stroke="#bbb" fill="none" />
    </svg>
    <span className="flex size-[15px] items-center justify-center rounded-full border border-[#aab] bg-[#0a18a8] font-['Liberation_Sans',sans-serif] text-xs font-bold leading-none text-white">?</span>
    <svg viewBox="0 0 6 12" className="ml-1 h-3 w-[6px]" fill="#fff">
      <path d="M0 0h6v2H0zM0 9h6l-3 3z" />
    </svg>
  </div>
);

const greenP = (
  <>
    <path d="M4 32l6-5V3h16" fill="none" stroke="#108840" />
    <path d="M13 8h14q7 1 7 8 0 8-8 8h-2v9h-8l1-9-5 0z" fill="#109040" />
    <path d="M13 12h6m-6 4h6m-6 4h6m-5 4h6m-6 4h6" stroke="#303e50" />
  </>
);
const coil = (
  <>
    <ellipse cx="20" cy="23" rx="14" ry="9" fill="#109898" />
    <ellipse cx="20" cy="26" rx="12" ry="6" fill="none" stroke="#d8f0e8" strokeDasharray="3 2" />
    <ellipse cx="21" cy="20" rx="11" ry="7" fill="#20b8a8" stroke="#087070" />
    <ellipse cx="21" cy="19" rx="5" ry="5" fill="#106868" stroke="#f0e060" strokeWidth="2" />
    <path d="M2 11l8-7 8 3-4 5z" fill="#40c8b8" stroke="#107878" />
    <path d="M9 13q2 6 6 7" fill="none" stroke="#20a8a0" strokeWidth="4" />
    <path d="M11 24q6 5 12 4m4-2l5-5" fill="none" stroke="#e0e050" strokeWidth="1.500" />
  </>
);

const appButton = "w-[58px] from-[#66758a] to-[#2c3c52]";

const apps: [string, ReactNode, string][] = [
  ["Explorer", (
    <>
      <path d="M18 31L4 22Q0 12 9 8q4-6 9-4 5-3 9 3 9 4 6 14l-9 10z" fill="#f8d070" />
      <path d="M18 29L6 12m12 17L12 6m6 23V4m0 25L25 6m-7 23L31 12M18 29L4 20" stroke="#d89030" />
      <path d="M23 15l3 6 7 0-5 5 2 7-7-4-6 4 1-7-5-5 7 0z" fill="#e87818" stroke="#b85000" />
      <circle cx="23" cy="24" r="3" fill="none" stroke="#ffc880" />
    </>
  ), "w-[54px] mr-1 from-[#66758a] to-[#2c3c52] shadow-[4px_0_0_#3c4c60,5px_0_0_#8090a0]"],
  ["Notes", (
    <>
      <rect x="6" y="5" width="25" height="27" rx="2" fill="#e8f4fc" />
      <path d="M9 8.500h19m-19 4h19m-19 4h19m-19 4h19m-19 4h19m-19 4h19" stroke="#3890c0" strokeWidth="2" />
    </>
  ), appButton],
  ["Total Commander 64", (
    <>
      <path d="M3 3h27l3 3v28H3z" fill="#1838c8" />
      <path d="M11 3h14v11H11z" fill="#d8dce8" />
      <path d="M19 4h4v8h-4z" fill="#1838c8" />
      <path d="M7 17h22v16H7z" fill="#fff" />
      <path d="M8 20.500h20m-20 4h20m-20 5h10" stroke="#c02030" />
      <text x="19" y="32" fontSize="8" fontWeight="bold" fontFamily="Liberation Sans, sans-serif" fill="#333">64</text>
    </>
  ), appButton],
  ["Genesis tool", <path key="g" d="M31 2q1 7-5 8H17l-6 6-1 10h9l3-5h-4l2-5h11l-4 13-5 5H9l-4-4 1-14 8-9h11z" fill="#e02818" stroke="#901008" />, appButton],
  ["Plotter", greenP, appButton],
  ["DingTalk", (
    <>
      <circle cx="18" cy="18" r="16" fill="#3090f8" />
      <path d="M10 8l17 7q2 1 0 4l-3 4h3l-9 9 2-7h-4l2-4q-5-1-5-5l3 0q-5-2-6-8z" fill="#fff" />
    </>
  ), appButton],
  ["Genesis", coil, appButton],
  ["Xmanager", (
    <>
      <path d="M3 4h7l24 29h-8z" fill="#801080" stroke="#fff" />
      <path d="M31 3h2L5 34H2z" fill="#501050" stroke="#fff" strokeWidth=".7" />
    </>
  ), "w-[51px] mr-[6px] from-[#c8d0d8] to-[#808c9c] shadow-[4px_0_0_#3c4c60,5px_0_0_#8090a0]"],
  ["Plotter 2", greenP, appButton],
  ["Genesis 2", coil, appButton],
];

const Taskbar = () => (
  <footer className="flex h-10 shrink-0 items-stretch border-t-2 border-[#8a98a4] bg-gradient-to-r from-[#14202e] via-[#2a3e58] to-[#1a2a3e] font-['Open_Sans',sans-serif] text-white">
    <button aria-label="Start" className="mr-[5px] flex w-[54px] items-center justify-center">
      <svg viewBox="0 0 36 36" className="size-[36px]">
        <radialGradient id="orb" cx=".5" cy=".9" r=".9">
          <stop offset="0" stopColor="#50e0ff" />
          <stop offset=".5" stopColor="#1868a8" />
          <stop offset="1" stopColor="#a8c0d0" />
        </radialGradient>
        <circle cx="18" cy="18" r="17.500" fill="url(#orb)" stroke="#405870" />
        <path d="M10 9q4-2 8 0l-2 8q-4-2-8 0z" fill="#f06028" />
        <path d="M19 10q4 2 9 0l-2 8q-4 2-8 0z" fill="#90d030" />
        <path d="M8 19q4-2 8 0l-2 8q-4-2-8 0z" fill="#40a0f0" />
        <path d="M17 20q4 2 8 0l-2 8q-4 2-8 0z" fill="#ffd030" />
      </svg>
    </button>
    <div className="flex gap-1">
      {apps.map(([name, art, extra]) => (
        <button
          key={name}
          aria-label={name}
          className={clsx("flex items-center justify-center rounded-sm border border-[#8090a0] bg-gradient-to-br", extra)}
        >
          <svg viewBox="0 0 36 36" className="size-8">{art}</svg>
        </button>
      ))}
    </div>
    <div className="ml-auto flex items-center">
      <div className="mr-[5px] flex items-center gap-2">
        <svg viewBox="0 0 8 5" className="mr-2 h-[5px] w-2" fill="#fff">
          <path d="M0 5l4-5 4 5z" />
        </svg>
        <svg viewBox="0 0 16 16" className="size-4">
          <path d="M1.500 1v14" stroke="#fff" strokeWidth="1.500" />
          <path d="M3 2q3-1 5 1t6 0v6H3z" fill="#fff" />
          <circle cx="11" cy="11" r="4.500" fill="#d82020" />
          <path d="M9 9l4 4m0-4l-4 4" stroke="#fff" strokeWidth="1.500" />
        </svg>
        <svg viewBox="0 0 16 16" className="size-4" fill="none" stroke="#fff">
          <path d="M1 5h3l4-4v14l-4-4H1z" fill="#fff" />
          <path d="M10 5q2 3 0 6M12 3q4 5 0 10" />
        </svg>
        <svg viewBox="0 0 16 16" className="size-4" fill="none" stroke="#fff">
          <path d="M5.500 4.500h10v7h-10zM8 14.500h6M10.500 12v2" strokeWidth="1.500" />
          <path d="M1 1v4h4V1M3 5v6h2" />
        </svg>
      </div>
      <time className="flex w-[78px] flex-col items-center text-xs/[18px]">
        <span>20:04</span>
        <span>2022/6/10</span>
      </time>
      <button aria-label="Show desktop" className="h-full w-[14px] border border-[#8090a0] bg-[#4a5a6c]" />
    </div>
  </footer>
);

export default function App() {
  return (
    <div className="flex h-screen min-w-0 flex-col overflow-hidden bg-black text-black">
      <TitleBar />
      <MenuBar />
      <main className="flex min-h-0 flex-1">
        <LayerPanel />
        <div className="relative min-w-0 flex-1 overflow-hidden">
          <Board />
          <Popview />
        </div>
        <Toolbox />
      </main>
      <StatusRow />
      <div className="relative h-8 shrink-0 border-2 border-[#6a9494] bg-[#b8ffff] p-px">
        <div className="h-full border-b-2 border-r-2 border-[#78a8a8] outline-1 outline-black" />
        <LanguageBar />
      </div>
      <Taskbar />
    </div>
  );
}
